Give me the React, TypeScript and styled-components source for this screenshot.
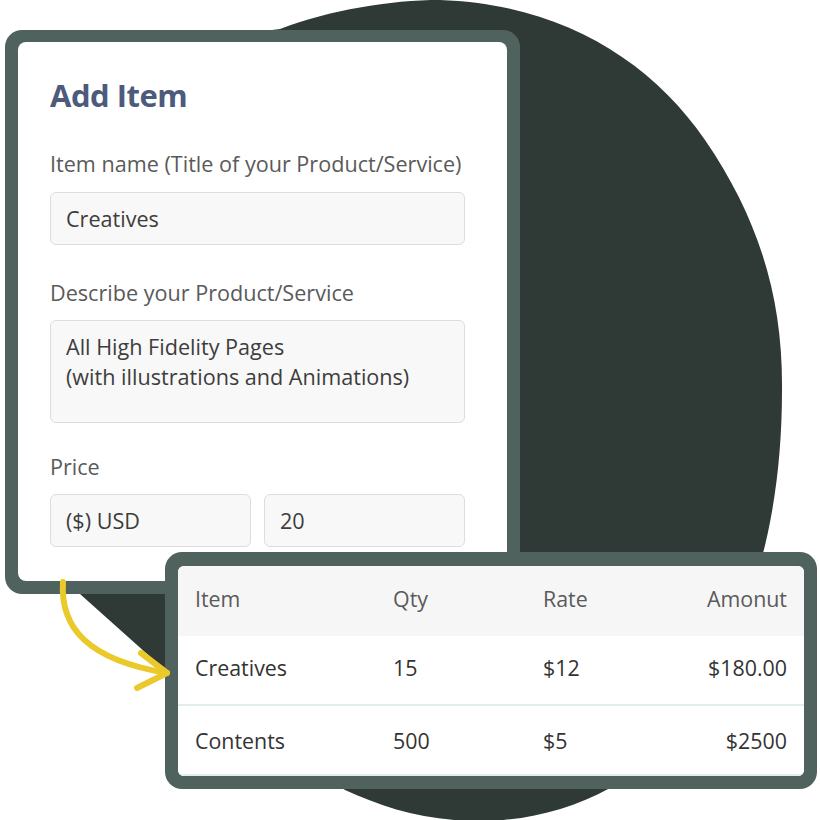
import styled, { createGlobalStyle } from "styled-components";

const GlobalStyle = createGlobalStyle`
  html, body {
    margin: 0;
    padding: 0;
    background: #ffffff;
  }
  body {
    font-family: "Open Sans", "Noto Sans", sans-serif;
  }
`;

const Stage = styled.div`
  position: relative;
  width: 820px;
  height: 820px;
  padding: 30px 0 0 5px;
  box-sizing: border-box;
  overflow: hidden;
`;

const Backdrop = styled.svg`
  position: absolute;
  left: 0;
  top: 0;
  z-index: 0;
`;

const Overlay = styled.svg`
  position: absolute;
  left: 0;
  top: 0;
  z-index: 3;
  pointer-events: none;
`;

const Frame = styled.div<{ $width: number }>`
  position: relative;
  width: ${(p) => p.$width}px;
  box-sizing: border-box;
  background: #4f625d;
  border-radius: 17px;
  padding: 12px 13px 13px 13px;
`;

const FormFrame = styled(Frame)`
  z-index: 1;
`;

const TableFrame = styled(Frame)`
  z-index: 2;
  margin: -42px 0 0 160px;
  padding: 14px 13px 13px 13px;
`;

const FormBody = styled.div`
  background: #ffffff;
  border-radius: 8px;
  height: 539px;
  box-sizing: border-box;
  padding: 33px 42px 0 32px;
`;

const Title = styled.h1`
  margin: 0;
  font-size: 31px;
  line-height: 40px;
  font-weight: 700;
  color: #4c5a7c;
  letter-spacing: -0.5px;
`;

const Field = styled.div<{ $gap: number }>`
  margin-top: ${(p) => p.$gap}px;
  display: flex;
  flex-direction: column;
`;

const Label = styled.label<{ $space: number }>`
  font-size: 21.6px;
  line-height: 28px;
  color: #5a5a5a;
  margin-bottom: ${(p) => p.$space}px;
`;

const Input = styled.div<{ $tall?: boolean }>`
  box-sizing: border-box;
  height: ${(p) => (p.$tall ? 103 : 53)}px;
  background: #f8f8f8;
  border: 1.5px solid #dddddd;
  border-radius: 6px;
  padding: ${(p) => (p.$tall ? "11px 15px" : "0 15px")};
  display: flex;
  align-items: ${(p) => (p.$tall ? "flex-start" : "center")};
  font-size: 21.6px;
  line-height: 30px;
  color: #3d3d3d;
  white-space: pre-line;
`;

const PriceRow = styled.div`
  display: grid;
  grid-template-columns: 1fr 1fr;
  gap: 13px;
`;

const TableBody = styled.div`
  background: #ffffff;
  border-radius: 6px;
  overflow: hidden;
`;

const Row = styled.div<{ $head?: boolean; $lift?: number }>`
  display: grid;
  grid-template-columns: 198px 150px 1fr auto;
  align-items: center;
  height: 70px;
  padding: 0 17px ${(p) => p.$lift ?? 0}px 17px;
  box-sizing: border-box;
  background: ${(p) => (p.$head ? "#f6f6f6" : "#ffffff")};
  border-bottom: ${(p) => (p.$head ? "none" : "2px solid #e4eded")};
  font-size: 21.4px;
  color: ${(p) => (p.$head ? "#5a5a5a" : "#333333")};
`;

const Cell = styled.span<{ $right?: boolean }>`
  text-align: ${(p) => (p.$right ? "right" : "left")};
`;

const rows = [
  { item: "Creatives", qty: "15", rate: "$12", amount: "$180.00", lift: 6 },
  { item: "Contents", qty: "500", rate: "$5", amount: "$2500", lift: 0 },
];

export default function App() {
  return (
    <>
      <GlobalStyle />
      <Stage>
        <Backdrop width="820" height="820" viewBox="0 0 820 820">
          <path
            d="M 280 29 C 330 10, 390 0, 440 0 C 560 4, 650 60, 705 140 C 760 220, 783 300, 782 390 C 782 560, 730 700, 610 788 C 570 810, 525 821, 480 821 C 425 821, 385 808, 345 790 L 165 670 L 80 594 L 40 560 L 40 60 Z"
            fill="#2f3a37"
          />
        </Backdrop>

        <FormFrame $width={515}>
          <FormBody>
            <Title>Add Item</Title>
            <Field $gap={35}>
              <Label $space={14}>Item name (Title of your Product/Service)</Label>
              <Input>Creatives</Input>
            </Field>
            <Field $gap={34}>
              <Label $space={13}>Describe your Product/Service</Label>
              <Input $tall>{"All High Fidelity Pages\n(with illustrations and Animations)"}</Input>
            </Field>
            <Field $gap={30}>
              <Label $space={13}>Price</Label>
              <PriceRow>
                <Input>($) USD</Input>
                <Input>20</Input>
              </PriceRow>
            </Field>
          </FormBody>
        </FormFrame>

        <TableFrame $width={652}>
          <TableBody>
            <Row $head $lift={6}>
              <Cell>Item</Cell>
              <Cell>Qty</Cell>
              <Cell>Rate</Cell>
              <Cell $right>Amonut</Cell>
            </Row>
            {rows.map((r) => (
              <Row key={r.item} $lift={r.lift}>
                <Cell>{r.item}</Cell>
                <Cell>{r.qty}</Cell>
                <Cell>{r.rate}</Cell>
                <Cell $right>{r.amount}</Cell>
              </Row>
            ))}
          </TableBody>
        </TableFrame>

        <Overlay width="820" height="820" viewBox="0 0 820 820">
          <g fill="none" stroke="#ebc92b" strokeWidth="6" strokeLinecap="round" strokeLinejoin="round">
            <path d="M 63 582 C 60 628, 88 660, 167 673" />
            <path d="M 141 653 L 167 673 L 137 688" />
          </g>
        </Overlay>
      </Stage>
    </>
  );
}
